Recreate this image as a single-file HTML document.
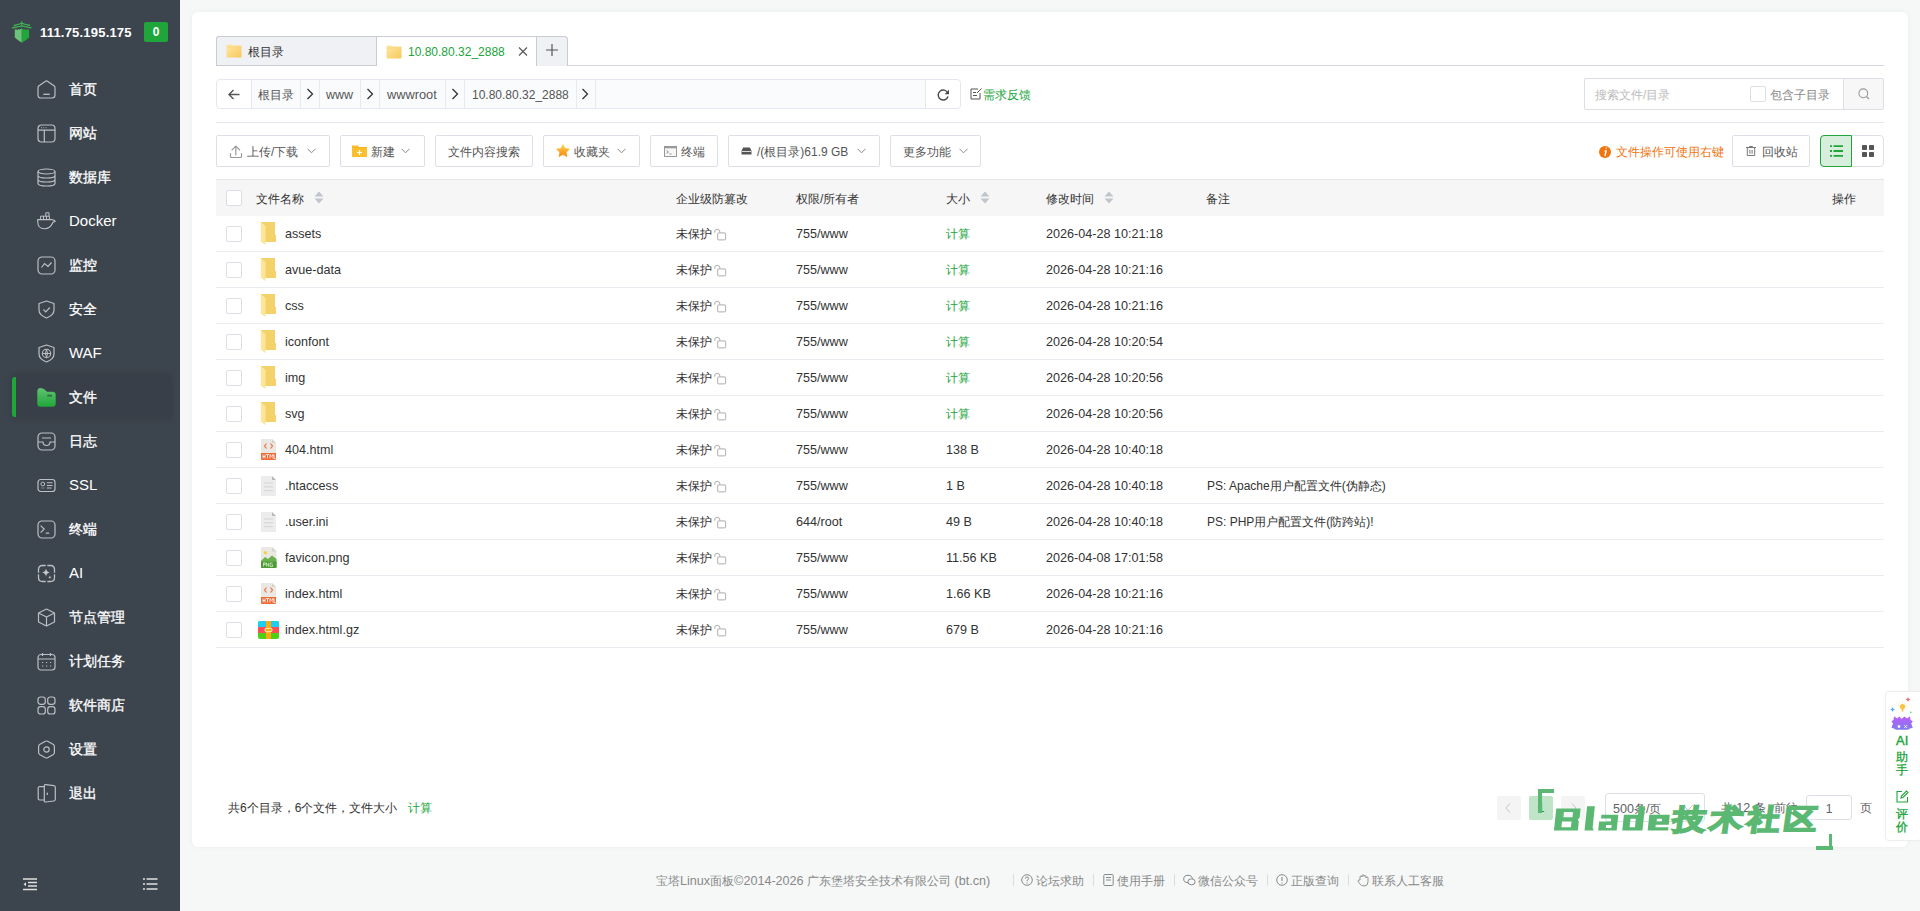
<!DOCTYPE html>
<html><head><meta charset="utf-8"><title>files</title>
<style>
*{box-sizing:border-box;margin:0;padding:0}
html,body{width:1920px;height:911px;overflow:hidden}
body{position:relative;background:#f6f8f8;font-family:"Liberation Sans",sans-serif;font-size:12px;color:#333}
.a{position:absolute;white-space:nowrap}
svg{display:block}
/* sidebar */
#side{position:absolute;left:0;top:0;width:180px;height:911px;background:#3c444d}
.mi{position:absolute;left:0;width:180px;height:44px}
.mi .ic{position:absolute;left:37px;top:13px;width:19px;height:19px}
.mi .tx{position:absolute;left:69px;top:0;line-height:44px;font-size:14px;color:#fff;-webkit-text-stroke:0.3px #fff}
/* card */
#card{position:absolute;left:192px;top:12px;width:1716px;height:835px;background:#fff;border-radius:6px;box-shadow:0 0 5px rgba(0,0,0,0.05)}
.btn{position:absolute;top:135px;height:32px;border:1px solid #dcdfe6;border-radius:2px;background:#fff;color:#555;line-height:30px;font-size:12px}
.row{position:absolute;left:216px;width:1668px;height:36px;border-bottom:1px solid #e8ebef}
.cb{position:absolute;width:16px;height:16px;border:1px solid #dcdfe6;border-radius:2px;background:#fff}
.c{position:absolute;top:0;line-height:35px;font-size:12px;color:#333;white-space:nowrap}
.g{color:#20a53a}
.L{font-size:12.6px}
</style></head><body>

<!-- ============ SIDEBAR ============ -->
<div id="side">
  <svg class="a" style="left:8px;top:17px" width="28" height="30" viewBox="0 0 28 30">
    <path d="M6.8 12.6 L8.3 12.3 L9.3 13.2 L10.4 11.9 L11.6 12.7 L13.8 11.2 V25.8 Q10 23.6 6.8 20.6 Z" fill="#6bc479"/>
    <path d="M13.8 11.2 L16 12.7 L17.2 11.9 L18.3 13.2 L19.4 12.3 L21.1 12.6 V20.6 Q18 23.6 13.8 25.8 Z" fill="#22a63b"/>
    <path d="M5.6 8.6 Q10 7.6 13.8 6.2 Q17.5 7.6 22.2 8.4" fill="none" stroke="#45bb5a" stroke-width="1.2"/>
    <path d="M4.2 11 Q9.5 10 13.8 8.9 Q18 10 23.4 10.9" fill="none" stroke="#3db553" stroke-width="1.3"/>
    <path d="M13.8 4 V9" stroke="#3db553" stroke-width="1"/>
  </svg>
  <div class="a" style="left:40px;top:25px;font-size:13px;font-weight:bold;color:#fff;line-height:16px;letter-spacing:0.2px">111.75.195.175</div>
  <div class="a" style="left:144px;top:22px;width:24px;height:20px;background:#20a53a;border-radius:2px;color:#fff;font-weight:bold;font-size:12px;line-height:20px;text-align:center">0</div>

  <div class="mi" style="top:67px"><svg class="ic" viewBox="0 0 19 19"><path d="M8.2 1.4 Q9.5 0.5 10.8 1.4 L17 5.8 Q18 6.5 18 7.8 V15 Q18 18 15 18 H4 Q1 18 1 15 V7.8 Q1 6.5 2 5.8 Z" fill="none" stroke="#bcbfc3" stroke-width="1.2" stroke-linejoin="round"/><path d="M6.3 14.3 H12.7" stroke="#bcbfc3" stroke-width="1.3"/></svg><div class="tx">首页</div></div>
  <div class="mi" style="top:111px"><svg class="ic" viewBox="0 0 19 19"><rect x="1" y="1" width="17" height="17" rx="3.5" fill="none" stroke="#bcbfc3" stroke-width="1.2"/><path d="M1 6.2 H18 M7.3 6.2 V18" stroke="#bcbfc3" stroke-width="1.2"/><path d="M4 3.7 h0.9 M6.3 3.7 h0.9 M8.6 3.7 h0.9" stroke="#bcbfc3" stroke-width="1.1"/></svg><div class="tx">网站</div></div>
  <div class="mi" style="top:155px"><svg class="ic" viewBox="0 0 19 19"><ellipse cx="9.5" cy="3.5" rx="8.5" ry="2.5" fill="none" stroke="#bcbfc3" stroke-width="1.2"/><path d="M1 3.5 V15.5 Q1 18 9.5 18 Q18 18 18 15.5 V3.5 M1 7.5 Q1 10 9.5 10 Q18 10 18 7.5 M1 11.5 Q1 14 9.5 14 Q18 14 18 11.5" fill="none" stroke="#bcbfc3" stroke-width="1.2"/></svg><div class="tx">数据库</div></div>
  <div class="mi" style="top:199px"><svg class="ic" style="top:13px;height:18px" viewBox="0 0 19 18"><path d="M0.7 7.6 H14.3 Q15.3 7.2 15.8 8.1 Q17.3 7.9 18.2 9.3 Q17.2 10.1 16 10.2 Q13.2 16.8 7.2 16.8 Q1 16.8 0.7 9.8 Z" fill="none" stroke="#bcbfc3" stroke-width="1.1" stroke-linejoin="round"/><path d="M3.6 7.4 V4.2 H12.4 V7.4 M6.5 4.2 V7.4 M9.5 4.2 V7.4 M8.8 4.2 V0.8 H12 V4.2" fill="none" stroke="#bcbfc3" stroke-width="1"/></svg><div class="tx" style="font-size:15px;-webkit-text-stroke:0">Docker</div></div>
  <div class="mi" style="top:243px"><svg class="ic" viewBox="0 0 19 19"><rect x="1" y="1" width="17" height="17" rx="4" fill="none" stroke="#bcbfc3" stroke-width="1.2"/><path d="M4.5 11.5 L7.5 7.5 L11 10.5 L14.5 6.5" fill="none" stroke="#bcbfc3" stroke-width="1.2"/></svg><div class="tx">监控</div></div>
  <div class="mi" style="top:287px"><svg class="ic" viewBox="0 0 19 19"><path d="M9.5 1 L17 3.5 V10 Q17 15 9.5 18 Q2 15 2 10 V3.5 Z" fill="none" stroke="#bcbfc3" stroke-width="1.2" stroke-linejoin="round"/><path d="M6.5 9.5 L8.8 11.8 L12.8 7.5" fill="none" stroke="#bcbfc3" stroke-width="1.2"/></svg><div class="tx">安全</div></div>
  <div class="mi" style="top:331px"><svg class="ic" viewBox="0 0 19 19"><path d="M9.5 1 L17 3.5 V10 Q17 15 9.5 18 Q2 15 2 10 V3.5 Z" fill="none" stroke="#bcbfc3" stroke-width="1.2" stroke-linejoin="round"/><circle cx="9.5" cy="9.5" r="4.2" fill="none" stroke="#bcbfc3" stroke-width="1.1"/><path d="M5.3 9.5 H13.7 M9.5 5.3 Q7.5 9.5 9.5 13.7 Q11.5 9.5 9.5 5.3" fill="none" stroke="#bcbfc3" stroke-width="1"/></svg><div class="tx" style="font-size:15px;-webkit-text-stroke:0">WAF</div></div>
  <div class="a" style="left:12px;top:375px;width:159px;height:43px;background:#393f48;border-radius:4px;box-shadow:0 0 4px 1px rgba(50,55,62,0.5)"></div>
  <div class="a" style="left:12px;top:377px;width:4px;height:40px;background:#20a53a;border-radius:3px 0 0 3px"></div>
  <div class="mi" style="top:375px"><svg class="ic" viewBox="0 0 19 19"><defs><linearGradient id="sg" x1="0" y1="0" x2="0" y2="1"><stop offset="0" stop-color="#60c270"/><stop offset="1" stop-color="#20a73a"/></linearGradient></defs><path d="M0.3 3.5 Q0.3 0 3.5 0 Q6 0 7.5 1.5 L10 3.8 H15.5 Q18.7 3.8 18.7 7 V15.5 Q18.7 18.7 15.5 18.7 H3.5 Q0.3 18.7 0.3 15.5 Z" fill="url(#sg)"/><rect x="10.2" y="6.8" width="4.8" height="1.8" rx="0.5" fill="#2f6a3e"/></svg><div class="tx">文件</div></div>
  <div class="mi" style="top:419px"><svg class="ic" viewBox="0 0 19 19"><rect x="1" y="1" width="17" height="17" rx="4" fill="none" stroke="#bcbfc3" stroke-width="1.2"/><path d="M5 6 H14 M1 10 H6 Q6 13.5 9.5 13.5 Q13 13.5 13 10 H18" fill="none" stroke="#bcbfc3" stroke-width="1.2"/></svg><div class="tx">日志</div></div>
  <div class="mi" style="top:463px"><svg class="ic" viewBox="0 0 19 19"><rect x="1" y="3.5" width="17" height="12" rx="2.8" fill="none" stroke="#bcbfc3" stroke-width="1.2"/><circle cx="5.8" cy="8" r="1.9" fill="none" stroke="#bcbfc3" stroke-width="1"/><path d="M4.3 12 h1 M6.3 12 h1" stroke="#bcbfc3" stroke-width="0.9"/><path d="M9.8 6.8 H15.5 M9.8 9.5 H15.5 M9.8 12 H14.5" stroke="#bcbfc3" stroke-width="1.1"/></svg><div class="tx" style="font-size:15px;-webkit-text-stroke:0">SSL</div></div>
  <div class="mi" style="top:507px"><svg class="ic" viewBox="0 0 19 19"><rect x="1" y="1" width="17" height="17" rx="4" fill="none" stroke="#bcbfc3" stroke-width="1.2"/><path d="M3.6 5.6 L7.2 9 L3.6 12.6 M8.8 13.2 H12.2" fill="none" stroke="#bcbfc3" stroke-width="1.2"/></svg><div class="tx">终端</div></div>
  <div class="mi" style="top:551px"><svg class="ic" viewBox="0 0 19 19"><path d="M8.7 1.5 H5.5 Q1.5 1.5 1.5 5.5 V8.7 M1.5 10.3 V13.5 Q1.5 17.5 5.5 17.5 H8.7 M10.3 17.5 H13.5 Q17.5 17.5 17.5 13.5 V10.3 M17.5 8.7 V5.5 Q17.5 1.5 13.5 1.5 H10.3" fill="none" stroke="#bcbfc3" stroke-width="1.3"/><path d="M9 4.6 Q9.5 8 12.9 8.4 Q9.5 8.9 9 12.4 Q8.5 8.9 5 8.4 Q8.5 8 9 4.6 Z" fill="#c4c6c9"/><path d="M12.9 11.6 Q13.1 13 14.5 13.3 Q13.1 13.6 12.9 15 Q12.7 13.6 11.3 13.3 Q12.7 13 12.9 11.6 Z" fill="#c4c6c9"/></svg><div class="tx" style="font-size:15px;-webkit-text-stroke:0">AI</div></div>
  <div class="mi" style="top:595px"><svg class="ic" viewBox="0 0 19 19"><path d="M9.5 1 L17.5 5 V14 L9.5 18 L1.5 14 V5 Z M1.5 5 L9.5 9 L17.5 5 M9.5 9 V18" fill="none" stroke="#bcbfc3" stroke-width="1.2" stroke-linejoin="round"/></svg><div class="tx">节点管理</div></div>
  <div class="mi" style="top:639px"><svg class="ic" viewBox="0 0 19 19"><rect x="1" y="2.5" width="17" height="15.5" rx="3" fill="none" stroke="#bcbfc3" stroke-width="1.2"/><path d="M1 7 H18 M5.5 1 V4 M13.5 1 V4" stroke="#bcbfc3" stroke-width="1.2"/><path d="M5 10.5 h1.2 M9 10.5 h1.2 M13 10.5 h1.2 M5 14 h1.2 M9 14 h1.2 M13 14 h1.2" stroke="#bcbfc3" stroke-width="1.2"/></svg><div class="tx">计划任务</div></div>
  <div class="mi" style="top:683px"><svg class="ic" viewBox="0 0 19 19"><rect x="1" y="1" width="7.3" height="7.3" rx="2.6" fill="none" stroke="#bcbfc3" stroke-width="1.2"/><rect x="10.7" y="1" width="7.3" height="7.3" rx="2.6" fill="none" stroke="#bcbfc3" stroke-width="1.2"/><rect x="1" y="10.7" width="7.3" height="7.3" rx="2.6" fill="none" stroke="#bcbfc3" stroke-width="1.2"/><rect x="10.7" y="10.7" width="7.3" height="7.3" rx="2.6" fill="none" stroke="#bcbfc3" stroke-width="1.2"/></svg><div class="tx">软件商店</div></div>
  <div class="mi" style="top:727px"><svg class="ic" viewBox="0 0 19 19"><path d="M8.4 1.3 Q9.5 0.7 10.6 1.3 L16.4 4.6 Q17.4 5.2 17.4 6.4 V12.6 Q17.4 13.8 16.4 14.4 L10.6 17.7 Q9.5 18.3 8.4 17.7 L2.6 14.4 Q1.6 13.8 1.6 12.6 V6.4 Q1.6 5.2 2.6 4.6 Z" fill="none" stroke="#bcbfc3" stroke-width="1.2"/><circle cx="9.5" cy="9.5" r="2.7" fill="none" stroke="#bcbfc3" stroke-width="1.2"/></svg><div class="tx">设置</div></div>
  <div class="mi" style="top:771px"><svg class="ic" viewBox="0 0 19 19"><path d="M7.3 2.6 H2.6 Q1.2 2.6 1.2 4 V14.6 Q1.2 16 2.6 16 H7.3" fill="none" stroke="#bcbfc3" stroke-width="1.2"/><path d="M8.8 0.6 L16.8 1.6 Q18.3 1.8 18.3 3.3 V15.3 Q18.3 16.8 16.8 17 L8.8 18 Q7.3 18.2 7.3 16.7 V1.9 Q7.3 0.4 8.8 0.6 Z" fill="none" stroke="#bcbfc3" stroke-width="1.2" stroke-linejoin="round"/><rect x="9.6" y="8.4" width="1.3" height="2.6" rx="0.6" fill="#bcbfc3"/></svg><div class="tx">退出</div></div>

  <svg class="a" style="left:23px;top:878px" width="15" height="13" viewBox="0 0 15 13"><path d="M0 1 H14 M5 4.5 H14 M5 8 H14 M0 11.5 H14" stroke="#e0e0e0" stroke-width="1.3"/><path d="M0.5 6.25 L3 4.3 V8.2 Z" fill="#e0e0e0"/></svg>
  <svg class="a" style="left:143px;top:878px" width="15" height="13" viewBox="0 0 15 13"><path d="M0 1 H2 M3.5 1 H14.5 M0 6 H2 M3.5 6 H14.5 M0 11 H2 M3.5 11 H14.5" stroke="#e0e0e0" stroke-width="1.3"/></svg>
</div>

<!-- ============ CARD ============ -->
<div id="card"></div>

<!-- tabs -->
<div class="a" style="left:216px;top:65px;width:1668px;height:1px;background:#d5d8de"></div>
<div class="a" style="left:216px;top:36px;width:161px;height:30px;background:#eff1f5;border:1px solid #c9ccd3;border-right:none;border-radius:3px 0 0 0"></div>
<div class="a" style="left:376px;top:36px;width:1px;height:30px;background:#c9ccd3"></div>
<div class="a" style="left:377px;top:36px;width:160px;height:30px;background:#fff;border-top:1px solid #c9ccd3"></div>
<div class="a" style="left:536px;top:36px;width:32px;height:30px;background:#eff1f5;border:1px solid #c9ccd3;border-bottom:none;border-radius:0 4px 0 0"></div>
<svg class="a" style="left:226px;top:44px" width="16" height="14" viewBox="0 0 16 14"><defs><linearGradient id="fg" x1="0" y1="0" x2="1" y2="1"><stop offset="0" stop-color="#ffe9a6"/><stop offset="1" stop-color="#f7c85a"/></linearGradient></defs><path d="M0.5 1.5 Q0.5 0.5 1.5 0.5 H5.5 L7 1.5 H14.5 Q15.5 1.5 15.5 2.5 V12.5 Q15.5 13.5 14.5 13.5 H1.5 Q0.5 13.5 0.5 12.5 Z" fill="url(#fg)"/><path d="M0.5 3 H15.5" stroke="#f5d47a" stroke-width="0.6"/></svg>
<div class="a" style="left:248px;top:45px;line-height:14px;font-size:12px;color:#333">根目录</div>
<svg class="a" style="left:386px;top:45px" width="16" height="14" viewBox="0 0 16 14"><path d="M0.5 1.5 Q0.5 0.5 1.5 0.5 H5.5 L7 1.5 H14.5 Q15.5 1.5 15.5 2.5 V12.5 Q15.5 13.5 14.5 13.5 H1.5 Q0.5 13.5 0.5 12.5 Z" fill="url(#fg)"/><path d="M0.5 3 H15.5" stroke="#f5d47a" stroke-width="0.6"/></svg>
<div class="a" style="left:408px;top:45px;line-height:14px;font-size:12px;color:#20a53a">10.80.80.32_2888</div>
<svg class="a" style="left:518px;top:47px" width="10" height="9" viewBox="0 0 10 9"><path d="M1 0.5 L9 8.5 M9 0.5 L1 8.5" stroke="#555" stroke-width="1.1"/></svg>
<svg class="a" style="left:546px;top:44px" width="12" height="12" viewBox="0 0 12 12"><path d="M6 0 V12 M0 6 H12" stroke="#555" stroke-width="1.2"/></svg>

<!-- breadcrumb -->
<div class="a" style="left:216px;top:79px;width:745px;height:30px;border:1px solid #e4e7ed;border-radius:4px;background:#fafbfd"></div>
<div class="a" style="left:217px;top:80px;width:35px;height:28px;background:#fff;border-radius:4px 0 0 4px;border-right:1px solid #e4e7ed"></div>
<div class="a" style="left:925px;top:80px;width:35px;height:28px;background:#fff;border-radius:0 4px 4px 0;border-left:1px solid #e4e7ed"></div>
<svg class="a" style="left:228px;top:89px" width="12" height="11" viewBox="0 0 12 11"><path d="M11.5 5.5 H1.5 M5.5 1 L1 5.5 L5.5 10" fill="none" stroke="#555" stroke-width="1.4"/></svg>
<div class="a" style="left:300px;top:80px;width:1px;height:28px;background:#e8eaef"></div>
<div class="a" style="left:319px;top:80px;width:1px;height:28px;background:#e8eaef"></div>
<div class="a" style="left:360px;top:80px;width:1px;height:28px;background:#e8eaef"></div>
<div class="a" style="left:379px;top:80px;width:1px;height:28px;background:#e8eaef"></div>
<div class="a" style="left:445px;top:80px;width:1px;height:28px;background:#e8eaef"></div>
<div class="a" style="left:464px;top:80px;width:1px;height:28px;background:#e8eaef"></div>
<div class="a" style="left:576px;top:80px;width:1px;height:28px;background:#e8eaef"></div>
<div class="a" style="left:595px;top:80px;width:1px;height:28px;background:#e8eaef"></div>
<div class="a" style="left:258px;top:81px;line-height:28px;color:#555">根目录</div>
<div class="a" style="left:326px;top:81px;line-height:28px;color:#555;font-size:12.5px">www</div>
<div class="a" style="left:387px;top:81px;line-height:28px;color:#555;font-size:12.8px">wwwroot</div>
<div class="a" style="left:472px;top:81px;line-height:28px;color:#555">10.80.80.32_2888</div>
<svg class="a" style="left:306px;top:88px" width="8" height="12" viewBox="0 0 8 12"><path d="M1.5 1 L6.5 6 L1.5 11" fill="none" stroke="#333" stroke-width="1.3"/></svg>
<svg class="a" style="left:366px;top:88px" width="8" height="12" viewBox="0 0 8 12"><path d="M1.5 1 L6.5 6 L1.5 11" fill="none" stroke="#333" stroke-width="1.3"/></svg>
<svg class="a" style="left:451px;top:88px" width="8" height="12" viewBox="0 0 8 12"><path d="M1.5 1 L6.5 6 L1.5 11" fill="none" stroke="#333" stroke-width="1.3"/></svg>
<svg class="a" style="left:581px;top:88px" width="8" height="12" viewBox="0 0 8 12"><path d="M1.5 1 L6.5 6 L1.5 11" fill="none" stroke="#333" stroke-width="1.3"/></svg>
<svg class="a" style="left:937px;top:89px" width="13" height="12" viewBox="0 0 13 12"><path d="M10.8 4 A5 5 0 1 0 11 7.5" fill="none" stroke="#4a4a4a" stroke-width="1.45"/><path d="M12 0.8 V5.2 H7.6 Z" fill="#4a4a4a"/></svg>
<svg class="a" style="left:970px;top:88px" width="12" height="12" viewBox="0 0 12 12"><path d="M8 1 H1 V11 H10 V5" fill="none" stroke="#555" stroke-width="1"/><path d="M3 4.5 H6 M3 7.5 H7" stroke="#555" stroke-width="1"/><path d="M7 5 L11.5 0.5" stroke="#555" stroke-width="1"/></svg>
<div class="a" style="left:983px;top:88px;line-height:14px;color:#20a53a">需求反馈</div>

<!-- search -->
<div class="a" style="left:1584px;top:78px;width:300px;height:32px;border:1px solid #dcdfe6;border-radius:2px;background:#fff"></div>
<div class="a" style="left:1843px;top:79px;width:40px;height:30px;background:#f7f7f7;border-left:1px solid #dcdfe6"></div>
<div class="a" style="left:1595px;top:88px;line-height:14px;color:#bbb">搜索文件/目录</div>
<div class="cb" style="left:1750px;top:86px"></div>
<div class="a" style="left:1770px;top:88px;line-height:14px;color:#888">包含子目录</div>
<svg class="a" style="left:1858px;top:88px" width="12" height="12" viewBox="0 0 12 12"><circle cx="5.3" cy="5.3" r="4.4" fill="none" stroke="#999" stroke-width="1.1"/><path d="M8.5 8.5 L11 11" stroke="#999" stroke-width="1.2"/></svg>

<div class="a" style="left:216px;top:122px;width:1668px;height:1px;background:#e4e7ed"></div>

<!-- toolbar -->
<div class="btn" style="left:216px;width:114px"></div>
<svg class="a" style="left:229px;top:145px" width="14" height="14" viewBox="0 0 14 14"><path d="M6.8 10.3 V1.3 M2.6 5.4 L6.8 1.2 L11 5.4" fill="none" stroke="#9a9a9a" stroke-width="1.2"/><path d="M1.5 8.3 V11.6 Q1.5 12.5 2.4 12.5 H11.6 Q12.5 12.5 12.5 11.6 V8.3" fill="none" stroke="#9a9a9a" stroke-width="1.2"/></svg>
<div class="a" style="left:247px;top:145px;line-height:14px;color:#555">上传/下载</div>
<svg class="a" style="left:307px;top:148px" width="9" height="6" viewBox="0 0 9 6"><path d="M0.5 0.8 L4.5 4.8 L8.5 0.8" fill="none" stroke="#888" stroke-width="1"/></svg>

<div class="btn" style="left:340px;width:85px"></div>
<svg class="a" style="left:352px;top:145px" width="15" height="12" viewBox="0 0 15 12"><path d="M0 0.5 H6 L7 2 H15 V12 H0 Z" fill="#fbc02d"/><path d="M0 2.5 H15" stroke="#f9a825" stroke-width="0.6"/><path d="M7.5 5 V10 M5 7.5 H10" stroke="#fff" stroke-width="1.2"/></svg>
<div class="a" style="left:371px;top:145px;line-height:14px;color:#555">新建</div>
<svg class="a" style="left:401px;top:148px" width="9" height="6" viewBox="0 0 9 6"><path d="M0.5 0.8 L4.5 4.8 L8.5 0.8" fill="none" stroke="#888" stroke-width="1"/></svg>

<div class="btn" style="left:435px;width:98px"></div>
<div class="a" style="left:448px;top:145px;line-height:14px;color:#555">文件内容搜索</div>

<div class="btn" style="left:543px;width:97px"></div>
<svg class="a" style="left:556px;top:144px" width="14" height="13" viewBox="0 0 14 13"><defs><linearGradient id="stg" x1="0" y1="0" x2="0" y2="1"><stop offset="0" stop-color="#ffd34d"/><stop offset="1" stop-color="#f7860c"/></linearGradient></defs><path d="M7 0.5 L9 4.5 L13.5 5.1 L10.2 8.2 L11 12.6 L7 10.5 L3 12.6 L3.8 8.2 L0.5 5.1 L5 4.5 Z" fill="url(#stg)" stroke="url(#stg)" stroke-width="0.6" stroke-linejoin="round"/></svg>
<div class="a" style="left:574px;top:145px;line-height:14px;color:#555">收藏夹</div>
<svg class="a" style="left:617px;top:148px" width="9" height="6" viewBox="0 0 9 6"><path d="M0.5 0.8 L4.5 4.8 L8.5 0.8" fill="none" stroke="#888" stroke-width="1"/></svg>

<div class="btn" style="left:650px;width:68px"></div>
<svg class="a" style="left:664px;top:146px" width="13" height="11" viewBox="0 0 13 11"><rect x="0.5" y="0.5" width="12" height="10" fill="#f7f7f7" stroke="#999" stroke-width="1"/><rect x="0.5" y="0.5" width="12" height="1.8" fill="#999"/><path d="M2.5 4.5 L4.5 6 L2.5 7.5 M5.5 8 H7.5" fill="none" stroke="#888" stroke-width="0.9"/></svg>
<div class="a" style="left:681px;top:145px;line-height:14px;color:#555">终端</div>

<div class="btn" style="left:728px;width:152px"></div>
<svg class="a" style="left:741px;top:147px" width="11" height="8" viewBox="0 0 11 8"><path d="M2 0.5 H9 L10.5 4 V7.5 H0.5 V4 Z" fill="#555"/><path d="M1 4.5 H10" stroke="#fff" stroke-width="0.8"/></svg>
<div class="a" style="left:757px;top:145px;line-height:14px;color:#555">/(根目录)61.9 GB</div>
<svg class="a" style="left:857px;top:148px" width="9" height="6" viewBox="0 0 9 6"><path d="M0.5 0.8 L4.5 4.8 L8.5 0.8" fill="none" stroke="#888" stroke-width="1"/></svg>

<div class="btn" style="left:890px;width:91px"></div>
<div class="a" style="left:903px;top:145px;line-height:14px;color:#555">更多功能</div>
<svg class="a" style="left:959px;top:148px" width="9" height="6" viewBox="0 0 9 6"><path d="M0.5 0.8 L4.5 4.8 L8.5 0.8" fill="none" stroke="#888" stroke-width="1"/></svg>

<svg class="a" style="left:1599px;top:146px" width="12" height="12" viewBox="0 0 12 12"><circle cx="6" cy="6" r="6" fill="#f0750f"/><path d="M6.6 2.2 h1 M5.6 5 L7 5 L6 10" fill="none" stroke="#fff" stroke-width="1.4"/></svg>
<div class="a" style="left:1616px;top:145px;line-height:14px;color:#f0750f">文件操作可使用右键</div>

<div class="btn" style="left:1732px;width:78px"></div>
<svg class="a" style="left:1746px;top:146px" width="10" height="10" viewBox="0 0 10 10"><path d="M0 1.5 H10 M3.5 1.5 V0.5 H6.5 V1.5" fill="none" stroke="#777" stroke-width="1"/><path d="M1.3 2 V9.5 H8.7 V2 M3.9 3.8 V7.8 M6.1 3.8 V7.8" fill="none" stroke="#777" stroke-width="1"/></svg>
<div class="a" style="left:1762px;top:145px;line-height:14px;color:#555">回收站</div>

<div class="a" style="left:1820px;top:135px;width:64px;height:32px;border:1px solid #dcdfe6;border-radius:4px;background:#fff"></div>
<div class="a" style="left:1820px;top:135px;width:32px;height:32px;border:1px solid #20a53a;border-radius:4px 0 0 4px;background:#d6eedb"></div>
<svg class="a" style="left:1830px;top:145px" width="13" height="12" viewBox="0 0 13 12"><path d="M0 1.2 H2 M3.5 1.2 H13 M0 6 H2 M3.5 6 H13 M0 10.8 H2 M3.5 10.8 H13" stroke="#20a53a" stroke-width="1.8"/></svg>
<svg class="a" style="left:1862px;top:145px" width="12" height="12" viewBox="0 0 12 12"><rect x="0" y="0" width="5" height="5" rx="0.8" fill="#555"/><rect x="7" y="0" width="5" height="5" rx="0.8" fill="#555"/><rect x="0" y="7" width="5" height="5" rx="0.8" fill="#555"/><rect x="7" y="7" width="5" height="5" rx="0.8" fill="#555"/></svg>

<!-- table header -->
<div class="a" style="left:216px;top:179px;width:1668px;height:37px;background:#f6f6f6;border-top:1px solid #e3e7eb"></div>
<div class="cb" style="left:226px;top:190px"></div>
<div class="a" style="left:256px;top:192px;line-height:14px;color:#333">文件名称</div>
<div class="a" style="left:676px;top:192px;line-height:14px;color:#333">企业级防篡改</div>
<div class="a" style="left:796px;top:192px;line-height:14px;color:#333">权限/所有者</div>
<div class="a" style="left:946px;top:192px;line-height:14px;color:#333">大小</div>
<div class="a" style="left:1046px;top:192px;line-height:14px;color:#333">修改时间</div>
<div class="a" style="left:1206px;top:192px;line-height:14px;color:#333">备注</div>
<div class="a" style="left:1832px;top:192px;line-height:14px;color:#333">操作</div>
<svg class="a" style="left:314px;top:191px" width="10" height="13" viewBox="0 0 10 13"><path d="M5 0.5 L9.5 5.5 H0.5 Z M5 12.5 L9.5 7.5 H0.5 Z" fill="#c0c4cc"/></svg>
<svg class="a" style="left:980px;top:191px" width="10" height="13" viewBox="0 0 10 13"><path d="M5 0.5 L9.5 5.5 H0.5 Z M5 12.5 L9.5 7.5 H0.5 Z" fill="#c0c4cc"/></svg>
<svg class="a" style="left:1104px;top:191px" width="10" height="13" viewBox="0 0 10 13"><path d="M5 0.5 L9.5 5.5 H0.5 Z M5 12.5 L9.5 7.5 H0.5 Z" fill="#c0c4cc"/></svg>

<!-- rows -->
<div class="row" style="top:216px"></div>
<div class="cb" style="left:226px;top:226px"></div>
<svg class="a" style="left:260px;top:222px" width="17" height="24" viewBox="0 0 17 24"><path d="M1 0 H15 V13 H16 V20 H1 Z" fill="#f4d269"/><path d="M0.8 0 L5.5 4 V23.2 L0.8 19.5 Z" fill="#fde59a"/></svg>
<div class="c L" style="left:285px;top:217px">assets</div>
<div class="c" style="left:676px;top:217px">未保护</div>
<svg class="a" style="left:713px;top:228px" width="14" height="13" viewBox="0 0 14 13"><path d="M1.6 4.8 V4 A2.6 2.6 0 0 1 6.8 4 V5" fill="none" stroke="#bdbdbd" stroke-width="1.2"/><rect x="4.6" y="4.9" width="8" height="7" rx="1.5" fill="none" stroke="#bdbdbd" stroke-width="1.2"/></svg>
<div class="c L" style="left:796px;top:217px">755/www</div>
<div class="c g" style="left:946px;top:217px">计算</div>
<div class="c L" style="left:1046px;top:217px">2026-04-28 10:21:18</div>
<div class="row" style="top:252px"></div>
<div class="cb" style="left:226px;top:262px"></div>
<svg class="a" style="left:260px;top:258px" width="17" height="24" viewBox="0 0 17 24"><path d="M1 0 H15 V13 H16 V20 H1 Z" fill="#f4d269"/><path d="M0.8 0 L5.5 4 V23.2 L0.8 19.5 Z" fill="#fde59a"/></svg>
<div class="c L" style="left:285px;top:253px">avue-data</div>
<div class="c" style="left:676px;top:253px">未保护</div>
<svg class="a" style="left:713px;top:264px" width="14" height="13" viewBox="0 0 14 13"><path d="M1.6 4.8 V4 A2.6 2.6 0 0 1 6.8 4 V5" fill="none" stroke="#bdbdbd" stroke-width="1.2"/><rect x="4.6" y="4.9" width="8" height="7" rx="1.5" fill="none" stroke="#bdbdbd" stroke-width="1.2"/></svg>
<div class="c L" style="left:796px;top:253px">755/www</div>
<div class="c g" style="left:946px;top:253px">计算</div>
<div class="c L" style="left:1046px;top:253px">2026-04-28 10:21:16</div>
<div class="row" style="top:288px"></div>
<div class="cb" style="left:226px;top:298px"></div>
<svg class="a" style="left:260px;top:294px" width="17" height="24" viewBox="0 0 17 24"><path d="M1 0 H15 V13 H16 V20 H1 Z" fill="#f4d269"/><path d="M0.8 0 L5.5 4 V23.2 L0.8 19.5 Z" fill="#fde59a"/></svg>
<div class="c L" style="left:285px;top:289px">css</div>
<div class="c" style="left:676px;top:289px">未保护</div>
<svg class="a" style="left:713px;top:300px" width="14" height="13" viewBox="0 0 14 13"><path d="M1.6 4.8 V4 A2.6 2.6 0 0 1 6.8 4 V5" fill="none" stroke="#bdbdbd" stroke-width="1.2"/><rect x="4.6" y="4.9" width="8" height="7" rx="1.5" fill="none" stroke="#bdbdbd" stroke-width="1.2"/></svg>
<div class="c L" style="left:796px;top:289px">755/www</div>
<div class="c g" style="left:946px;top:289px">计算</div>
<div class="c L" style="left:1046px;top:289px">2026-04-28 10:21:16</div>
<div class="row" style="top:324px"></div>
<div class="cb" style="left:226px;top:334px"></div>
<svg class="a" style="left:260px;top:330px" width="17" height="24" viewBox="0 0 17 24"><path d="M1 0 H15 V13 H16 V20 H1 Z" fill="#f4d269"/><path d="M0.8 0 L5.5 4 V23.2 L0.8 19.5 Z" fill="#fde59a"/></svg>
<div class="c L" style="left:285px;top:325px">iconfont</div>
<div class="c" style="left:676px;top:325px">未保护</div>
<svg class="a" style="left:713px;top:336px" width="14" height="13" viewBox="0 0 14 13"><path d="M1.6 4.8 V4 A2.6 2.6 0 0 1 6.8 4 V5" fill="none" stroke="#bdbdbd" stroke-width="1.2"/><rect x="4.6" y="4.9" width="8" height="7" rx="1.5" fill="none" stroke="#bdbdbd" stroke-width="1.2"/></svg>
<div class="c L" style="left:796px;top:325px">755/www</div>
<div class="c g" style="left:946px;top:325px">计算</div>
<div class="c L" style="left:1046px;top:325px">2026-04-28 10:20:54</div>
<div class="row" style="top:360px"></div>
<div class="cb" style="left:226px;top:370px"></div>
<svg class="a" style="left:260px;top:366px" width="17" height="24" viewBox="0 0 17 24"><path d="M1 0 H15 V13 H16 V20 H1 Z" fill="#f4d269"/><path d="M0.8 0 L5.5 4 V23.2 L0.8 19.5 Z" fill="#fde59a"/></svg>
<div class="c L" style="left:285px;top:361px">img</div>
<div class="c" style="left:676px;top:361px">未保护</div>
<svg class="a" style="left:713px;top:372px" width="14" height="13" viewBox="0 0 14 13"><path d="M1.6 4.8 V4 A2.6 2.6 0 0 1 6.8 4 V5" fill="none" stroke="#bdbdbd" stroke-width="1.2"/><rect x="4.6" y="4.9" width="8" height="7" rx="1.5" fill="none" stroke="#bdbdbd" stroke-width="1.2"/></svg>
<div class="c L" style="left:796px;top:361px">755/www</div>
<div class="c g" style="left:946px;top:361px">计算</div>
<div class="c L" style="left:1046px;top:361px">2026-04-28 10:20:56</div>
<div class="row" style="top:396px"></div>
<div class="cb" style="left:226px;top:406px"></div>
<svg class="a" style="left:260px;top:402px" width="17" height="24" viewBox="0 0 17 24"><path d="M1 0 H15 V13 H16 V20 H1 Z" fill="#f4d269"/><path d="M0.8 0 L5.5 4 V23.2 L0.8 19.5 Z" fill="#fde59a"/></svg>
<div class="c L" style="left:285px;top:397px">svg</div>
<div class="c" style="left:676px;top:397px">未保护</div>
<svg class="a" style="left:713px;top:408px" width="14" height="13" viewBox="0 0 14 13"><path d="M1.6 4.8 V4 A2.6 2.6 0 0 1 6.8 4 V5" fill="none" stroke="#bdbdbd" stroke-width="1.2"/><rect x="4.6" y="4.9" width="8" height="7" rx="1.5" fill="none" stroke="#bdbdbd" stroke-width="1.2"/></svg>
<div class="c L" style="left:796px;top:397px">755/www</div>
<div class="c g" style="left:946px;top:397px">计算</div>
<div class="c L" style="left:1046px;top:397px">2026-04-28 10:20:56</div>
<div class="row" style="top:432px"></div>
<div class="cb" style="left:226px;top:442px"></div>
<svg class="a" style="left:261px;top:439px" width="15" height="21" viewBox="0 0 15 21"><path d="M0 1 Q0 0 1 0 H11 L15 4 V20 Q15 21 14 21 H1 Q0 21 0 20 Z" fill="#e9e8e3"/><path d="M11 0 V4 H15 Z" fill="#d6d4cc"/><path d="M5.5 4.5 L3.5 7 L5.5 9.5 M9.5 4.5 L11.5 7 L9.5 9.5" fill="none" stroke="#ee6a37" stroke-width="1.1"/><path d="M0 14 H15 V20 Q15 21 14 21 H1 Q0 21 0 20 Z" fill="#ee6a37"/><path d="M2 15.5 V19.5 M2 17.5 H4 M4 15.5 V19.5 M5 15.5 H8 M6.5 15.5 V19.5 M9 19.5 V15.5 L10.5 17.5 L12 15.5 V19.5 M13 15.5 V19.5 H14.5" fill="none" stroke="#fff" stroke-width="0.8"/></svg>
<div class="c L" style="left:285px;top:433px">404.html</div>
<div class="c" style="left:676px;top:433px">未保护</div>
<svg class="a" style="left:713px;top:444px" width="14" height="13" viewBox="0 0 14 13"><path d="M1.6 4.8 V4 A2.6 2.6 0 0 1 6.8 4 V5" fill="none" stroke="#bdbdbd" stroke-width="1.2"/><rect x="4.6" y="4.9" width="8" height="7" rx="1.5" fill="none" stroke="#bdbdbd" stroke-width="1.2"/></svg>
<div class="c L" style="left:796px;top:433px">755/www</div>
<div class="c L" style="left:946px;top:433px">138 B</div>
<div class="c L" style="left:1046px;top:433px">2026-04-28 10:40:18</div>
<div class="row" style="top:468px"></div>
<div class="cb" style="left:226px;top:478px"></div>
<svg class="a" style="left:261px;top:476px" width="15" height="20" viewBox="0 0 15 20"><path d="M0 0 H11 L15 4 V20 H0 Z" fill="#ececec"/><path d="M11 0 V4 H15 Z" fill="#b9b9b9"/><path d="M3 7 H12 M3 10.8 H12 M3 14.6 H12" stroke="#d4d4d4" stroke-width="1"/></svg>
<div class="c L" style="left:285px;top:469px">.htaccess</div>
<div class="c" style="left:676px;top:469px">未保护</div>
<svg class="a" style="left:713px;top:480px" width="14" height="13" viewBox="0 0 14 13"><path d="M1.6 4.8 V4 A2.6 2.6 0 0 1 6.8 4 V5" fill="none" stroke="#bdbdbd" stroke-width="1.2"/><rect x="4.6" y="4.9" width="8" height="7" rx="1.5" fill="none" stroke="#bdbdbd" stroke-width="1.2"/></svg>
<div class="c L" style="left:796px;top:469px">755/www</div>
<div class="c L" style="left:946px;top:469px">1 B</div>
<div class="c L" style="left:1046px;top:469px">2026-04-28 10:40:18</div>
<div class="c" style="left:1207px;top:469px">PS: Apache用户配置文件(伪静态)</div>
<div class="row" style="top:504px"></div>
<div class="cb" style="left:226px;top:514px"></div>
<svg class="a" style="left:261px;top:512px" width="15" height="20" viewBox="0 0 15 20"><path d="M0 0 H11 L15 4 V20 H0 Z" fill="#ececec"/><path d="M11 0 V4 H15 Z" fill="#b9b9b9"/><path d="M3 7 H12 M3 10.8 H12 M3 14.6 H12" stroke="#d4d4d4" stroke-width="1"/></svg>
<div class="c L" style="left:285px;top:505px">.user.ini</div>
<div class="c" style="left:676px;top:505px">未保护</div>
<svg class="a" style="left:713px;top:516px" width="14" height="13" viewBox="0 0 14 13"><path d="M1.6 4.8 V4 A2.6 2.6 0 0 1 6.8 4 V5" fill="none" stroke="#bdbdbd" stroke-width="1.2"/><rect x="4.6" y="4.9" width="8" height="7" rx="1.5" fill="none" stroke="#bdbdbd" stroke-width="1.2"/></svg>
<div class="c L" style="left:796px;top:505px">644/root</div>
<div class="c L" style="left:946px;top:505px">49 B</div>
<div class="c L" style="left:1046px;top:505px">2026-04-28 10:40:18</div>
<div class="c" style="left:1207px;top:505px">PS: PHP用户配置文件(防跨站)!</div>
<div class="row" style="top:540px"></div>
<div class="cb" style="left:226px;top:550px"></div>
<svg class="a" style="left:261px;top:547px" width="16" height="21" viewBox="0 0 16 21"><path d="M0 1 Q0 0 1 0 H11 L15.5 4.5 V20 Q15.5 21 14.5 21 H1 Q0 21 0 20 Z" fill="#e9e8e3"/><path d="M11 0 V4.5 H15.5 Z" fill="#d6d4cc"/><circle cx="4.5" cy="5.7" r="1.6" fill="#f9cd3b"/><path d="M0 14 L4 10 L7 12 L11 8.5 L15.5 12 V20 Q15.5 21 14.5 21 H1 Q0 21 0 20 Z" fill="#6ab04c"/><path d="M0 14.5 H15.5 V20 Q15.5 21 14.5 21 H1 Q0 21 0 20 Z" fill="#4e9a36"/><path d="M2.5 19.5 V15.8 H4.2 V17.5 H2.5 M5.3 19.5 V15.8 L7.7 19.5 V15.8 M11.5 16 H9.2 V19.5 H11.5 V17.8 H10.5" fill="none" stroke="#e8f5e0" stroke-width="0.7"/></svg>
<div class="c L" style="left:285px;top:541px">favicon.png</div>
<div class="c" style="left:676px;top:541px">未保护</div>
<svg class="a" style="left:713px;top:552px" width="14" height="13" viewBox="0 0 14 13"><path d="M1.6 4.8 V4 A2.6 2.6 0 0 1 6.8 4 V5" fill="none" stroke="#bdbdbd" stroke-width="1.2"/><rect x="4.6" y="4.9" width="8" height="7" rx="1.5" fill="none" stroke="#bdbdbd" stroke-width="1.2"/></svg>
<div class="c L" style="left:796px;top:541px">755/www</div>
<div class="c L" style="left:946px;top:541px">11.56 KB</div>
<div class="c L" style="left:1046px;top:541px">2026-04-08 17:01:58</div>
<div class="row" style="top:576px"></div>
<div class="cb" style="left:226px;top:586px"></div>
<svg class="a" style="left:261px;top:583px" width="15" height="21" viewBox="0 0 15 21"><path d="M0 1 Q0 0 1 0 H11 L15 4 V20 Q15 21 14 21 H1 Q0 21 0 20 Z" fill="#e9e8e3"/><path d="M11 0 V4 H15 Z" fill="#d6d4cc"/><path d="M5.5 4.5 L3.5 7 L5.5 9.5 M9.5 4.5 L11.5 7 L9.5 9.5" fill="none" stroke="#ee6a37" stroke-width="1.1"/><path d="M0 14 H15 V20 Q15 21 14 21 H1 Q0 21 0 20 Z" fill="#ee6a37"/><path d="M2 15.5 V19.5 M2 17.5 H4 M4 15.5 V19.5 M5 15.5 H8 M6.5 15.5 V19.5 M9 19.5 V15.5 L10.5 17.5 L12 15.5 V19.5 M13 15.5 V19.5 H14.5" fill="none" stroke="#fff" stroke-width="0.8"/></svg>
<div class="c L" style="left:285px;top:577px">index.html</div>
<div class="c" style="left:676px;top:577px">未保护</div>
<svg class="a" style="left:713px;top:588px" width="14" height="13" viewBox="0 0 14 13"><path d="M1.6 4.8 V4 A2.6 2.6 0 0 1 6.8 4 V5" fill="none" stroke="#bdbdbd" stroke-width="1.2"/><rect x="4.6" y="4.9" width="8" height="7" rx="1.5" fill="none" stroke="#bdbdbd" stroke-width="1.2"/></svg>
<div class="c L" style="left:796px;top:577px">755/www</div>
<div class="c L" style="left:946px;top:577px">1.66 KB</div>
<div class="c L" style="left:1046px;top:577px">2026-04-28 10:21:16</div>
<div class="row" style="top:612px"></div>
<div class="cb" style="left:226px;top:622px"></div>
<svg class="a" style="left:258px;top:621px" width="21" height="18" viewBox="0 0 21 18"><rect x="0" y="0" width="21" height="18" rx="2" fill="#4fd017"/><path d="M0 2 Q0 0 2 0 H19 Q21 0 21 2 V6 H0 Z" fill="#1ecef1"/><rect x="0" y="6" width="21" height="6" fill="#fd4e57"/><rect x="8" y="0" width="5" height="18" fill="#fbac0d"/><rect x="7" y="7.3" width="7" height="3.4" rx="1.2" fill="#fbac0d" stroke="#fff4d6" stroke-width="0.9"/></svg>
<div class="c L" style="left:285px;top:613px">index.html.gz</div>
<div class="c" style="left:676px;top:613px">未保护</div>
<svg class="a" style="left:713px;top:624px" width="14" height="13" viewBox="0 0 14 13"><path d="M1.6 4.8 V4 A2.6 2.6 0 0 1 6.8 4 V5" fill="none" stroke="#bdbdbd" stroke-width="1.2"/><rect x="4.6" y="4.9" width="8" height="7" rx="1.5" fill="none" stroke="#bdbdbd" stroke-width="1.2"/></svg>
<div class="c L" style="left:796px;top:613px">755/www</div>
<div class="c L" style="left:946px;top:613px">679 B</div>
<div class="c L" style="left:1046px;top:613px">2026-04-28 10:21:16</div>
<!-- summary -->
<div class="a" style="left:228px;top:801px;line-height:14px;color:#333">共6个目录，6个文件，文件大小</div>
<div class="a" style="left:408px;top:801px;line-height:14px;color:#20a53a">计算</div>

<!-- pagination -->
<div class="a" style="left:1497px;top:796px;width:24px;height:24px;background:#f4f4f5;border-radius:2px"></div>
<svg class="a" style="left:1505px;top:803px" width="6" height="10" viewBox="0 0 6 10"><path d="M5 0.5 L1 5 L5 9.5" fill="none" stroke="#c0c4cc" stroke-width="1"/></svg>
<div class="a" style="left:1529px;top:796px;width:24px;height:24px;background:#bfe4c7;border-radius:2px;color:#1b8f3a;text-align:center;line-height:24px">1</div>
<div class="a" style="left:1561px;top:796px;width:24px;height:24px;background:#f4f4f5;border-radius:2px"></div>
<svg class="a" style="left:1571px;top:803px" width="6" height="10" viewBox="0 0 6 10"><path d="M1 0.5 L5 5 L1 9.5" fill="none" stroke="#c0c4cc" stroke-width="1"/></svg>
<div class="a" style="left:1605px;top:793px;width:100px;height:29px;border:1px solid #dcdfe6;border-radius:3px;background:#fff"></div>
<div class="a" style="left:1613px;top:802px;line-height:14px;color:#606266"><span class="L">500</span>条/页</div>
<svg class="a" style="left:1683px;top:805px" width="10" height="6" viewBox="0 0 10 6"><path d="M0.5 0.5 L5 5 L9.5 0.5" fill="none" stroke="#c0c4cc" stroke-width="1"/></svg>
<div class="a" style="left:1721px;top:801px;line-height:14px;color:#606266">共 <span class="L">12</span> 条</div>
<div class="a" style="left:1774px;top:801px;line-height:14px;color:#606266">前往</div>
<div class="a" style="left:1806px;top:795px;width:46px;height:25px;border:1px solid #dcdfe6;border-radius:3px;background:#fff;text-align:center;line-height:27px;color:#606266">1</div>
<div class="a" style="left:1860px;top:801px;line-height:14px;color:#606266">页</div>

<!-- watermark -->
<div class="a" style="left:1538px;top:789px;width:16px;height:3.5px;background:#5bb873"></div>
<div class="a" style="left:1538px;top:789px;width:3.5px;height:24px;background:#5bb873"></div>
<div class="a" style="left:1816px;top:846px;width:16.5px;height:3.5px;background:#5bb873"></div>
<div class="a" style="left:1828.5px;top:834px;width:3.5px;height:16px;background:#5bb873"></div>
<svg class="a" style="left:1550px;top:800px" width="125" height="38" viewBox="0 0 1920 584"><g transform="translate(0,470) skewX(-6) translate(0,-470)" fill="#5bb873" fill-rule="evenodd">
<path d="M60 470 V130 H434 V268 L410 300 L428 332 V470 Z M184 185 H324 V265 H184 Z M170 330 H315 V420 H170 Z"/>
<path d="M530 470 V95 H650 V430 L672 470 Z"/>
<path d="M764 225 H1024 V470 H740 V330 H920 V285 H764 Z M853 385 H938 V430 H853 Z"/>
<path d="M1110 470 V225 H1325 V95 H1420 V470 Z M1218 290 H1300 V420 H1218 Z"/>
<path d="M1500 470 V225 H1815 V380 H1615 V420 H1815 V470 Z M1623 290 H1703 V330 H1623 Z"/>
</g></svg>
<div class="a" style="left:1671px;top:802px;font-size:28px;line-height:36px;font-weight:bold;color:#5bb873;-webkit-text-stroke:1.9px #5bb873;transform-origin:0 100%;transform:skewX(-8deg) scaleX(1.16);letter-spacing:3.8px">技术社区</div>

<!-- AI panel -->
<div class="a" style="left:1885px;top:691px;width:40px;height:150px;background:#fff;border:1px solid #eceef1;border-radius:4px;box-shadow:0 0 3px rgba(0,0,0,0.04)"></div>
<svg class="a" style="left:1888px;top:694px" width="28" height="40" viewBox="0 0 28 40"><defs><linearGradient id="mg" x1="0" y1="0" x2="0" y2="1"><stop offset="0" stop-color="#bd5bf7"/><stop offset="1" stop-color="#7e7df0"/></linearGradient></defs>
  <path d="M6 22.3 L9 24.5 L11.5 22.5 L13.5 25 L16.5 22.5 L19 24.5 L22 22.3 L22.5 26 L24.8 27.3 L23.2 29.5 L24.8 33.8 L22 34.5 L20 35.8 H8 L6 34.5 L3.5 33.8 L5 29.5 L3.3 27.3 L5.5 26 Z" fill="url(#mg)"/>
  <rect x="9.8" y="31.3" width="2.4" height="2.4" fill="#fff"/><path d="M16.3 31.2 L19 33.9 M19 31.2 L16.3 33.9" stroke="#fff" stroke-width="0.9"/>
  <circle cx="14.5" cy="12.6" r="2.7" fill="#f8c443"/><rect x="13.6" y="14.6" width="1.8" height="3" fill="#f8c443"/>
  <path d="M14.5 7.8 V9 M10.2 11.8 H11.2 M17.8 11.8 H18.8 M11.3 9 L12 9.7 M17.7 9 L17 9.7" stroke="#fbd36b" stroke-width="0.7"/>
  <path d="M4.5 13 Q4.8 15.2 7 15.5 Q4.8 15.8 4.5 18 Q4.2 15.8 2 15.5 Q4.2 15.2 4.5 13 Z" fill="#56a6f6"/>
  <path d="M20 3 Q20.3 5.2 22.5 5.5 Q20.3 5.8 20 8 Q19.7 5.8 17.5 5.5 Q19.7 5.2 20 3 Z" fill="#f06565"/>
  <circle cx="22.7" cy="18.3" r="0.9" fill="#5fdc95"/>
</svg>
<div class="a" style="left:1896px;top:734px;font-size:13px;line-height:14px;color:#20a53a;-webkit-text-stroke:0.4px #20a53a">AI</div>
<div class="a" style="left:1896px;top:751px;font-size:12px;line-height:12px;color:#20a53a;-webkit-text-stroke:0.3px #20a53a">助</div>
<div class="a" style="left:1896px;top:764px;font-size:12px;line-height:12px;color:#20a53a;-webkit-text-stroke:0.3px #20a53a">手</div>
<svg class="a" style="left:1896px;top:790px" width="13" height="13" viewBox="0 0 13 13"><path d="M6 1.5 H1 V12 H11.5 V7" fill="none" stroke="#20a53a" stroke-width="1.1"/><path d="M5 8 L5.5 6 L10.5 1 L12 2.5 L7 7.5 Z" fill="none" stroke="#20a53a" stroke-width="1.1"/></svg>
<div class="a" style="left:1896px;top:808px;font-size:12px;line-height:12px;color:#20a53a;-webkit-text-stroke:0.3px #20a53a">评</div>
<div class="a" style="left:1896px;top:821px;font-size:12px;line-height:12px;color:#20a53a;-webkit-text-stroke:0.3px #20a53a">价</div>

<!-- copyright -->
<div class="a" style="left:656px;top:874px;line-height:14px;color:#888">宝塔<span class="L">Linux</span>面板<span class="L">©2014-2026 </span>广东堡塔安全技术有限公司<span class="L"> (bt.cn)</span></div>
<div class="a" style="left:1013px;top:874px;width:1px;height:12px;background:#ddd"></div>
<svg class="a" style="left:1021px;top:874px" width="12" height="12" viewBox="0 0 12 12"><circle cx="6" cy="6" r="5.3" fill="none" stroke="#888" stroke-width="1"/><path d="M4.3 4.6 Q4.3 3 6 3 Q7.7 3 7.7 4.5 Q7.7 5.5 6 6.3 V7.3 M6 8.5 V9.5" fill="none" stroke="#888" stroke-width="1"/></svg>
<div class="a" style="left:1036px;top:874px;line-height:14px;color:#888">论坛求助</div>
<div class="a" style="left:1093px;top:874px;width:1px;height:12px;background:#ddd"></div>
<svg class="a" style="left:1103px;top:874px" width="11" height="12" viewBox="0 0 11 12"><rect x="0.8" y="0.5" width="9.4" height="11" rx="1" fill="none" stroke="#888" stroke-width="1"/><path d="M3 3.5 H8 M3 6 H8" stroke="#888" stroke-width="1"/></svg>
<div class="a" style="left:1117px;top:874px;line-height:14px;color:#888">使用手册</div>
<div class="a" style="left:1174px;top:874px;width:1px;height:12px;background:#ddd"></div>
<svg class="a" style="left:1183px;top:874px" width="13" height="12" viewBox="0 0 13 12"><ellipse cx="5" cy="5" rx="4.3" ry="3.7" fill="none" stroke="#888" stroke-width="1"/><ellipse cx="8.5" cy="7.8" rx="3.6" ry="3" fill="#f6f8f8" stroke="#888" stroke-width="1"/></svg>
<div class="a" style="left:1198px;top:874px;line-height:14px;color:#888">微信公众号</div>
<div class="a" style="left:1267px;top:874px;width:1px;height:12px;background:#ddd"></div>
<svg class="a" style="left:1276px;top:874px" width="12" height="12" viewBox="0 0 12 12"><circle cx="6" cy="6" r="5.3" fill="none" stroke="#888" stroke-width="1"/><path d="M6 3 V7 M6 8.5 V9.5" stroke="#888" stroke-width="1.1"/></svg>
<div class="a" style="left:1291px;top:874px;line-height:14px;color:#888">正版查询</div>
<div class="a" style="left:1348px;top:874px;width:1px;height:12px;background:#ddd"></div>
<svg class="a" style="left:1357px;top:874px" width="13" height="13" viewBox="0 0 13 13"><path d="M3 6 V3 Q3 2 4 2 Q5 2 5 3 V1.8 Q5 0.8 6 0.8 Q7 0.8 7 1.8 V2.5 Q7 1.5 8 1.5 Q9 1.5 9 2.5 V4 Q9 3 10 3 Q11 3 11 4 V8 Q11 12 7 12 Q4 12 2.5 9.5 L1 7 Q1 6 2 6 Z" fill="none" stroke="#888" stroke-width="0.9"/></svg>
<div class="a" style="left:1372px;top:874px;line-height:14px;color:#888">联系人工客服</div>

</body></html>
